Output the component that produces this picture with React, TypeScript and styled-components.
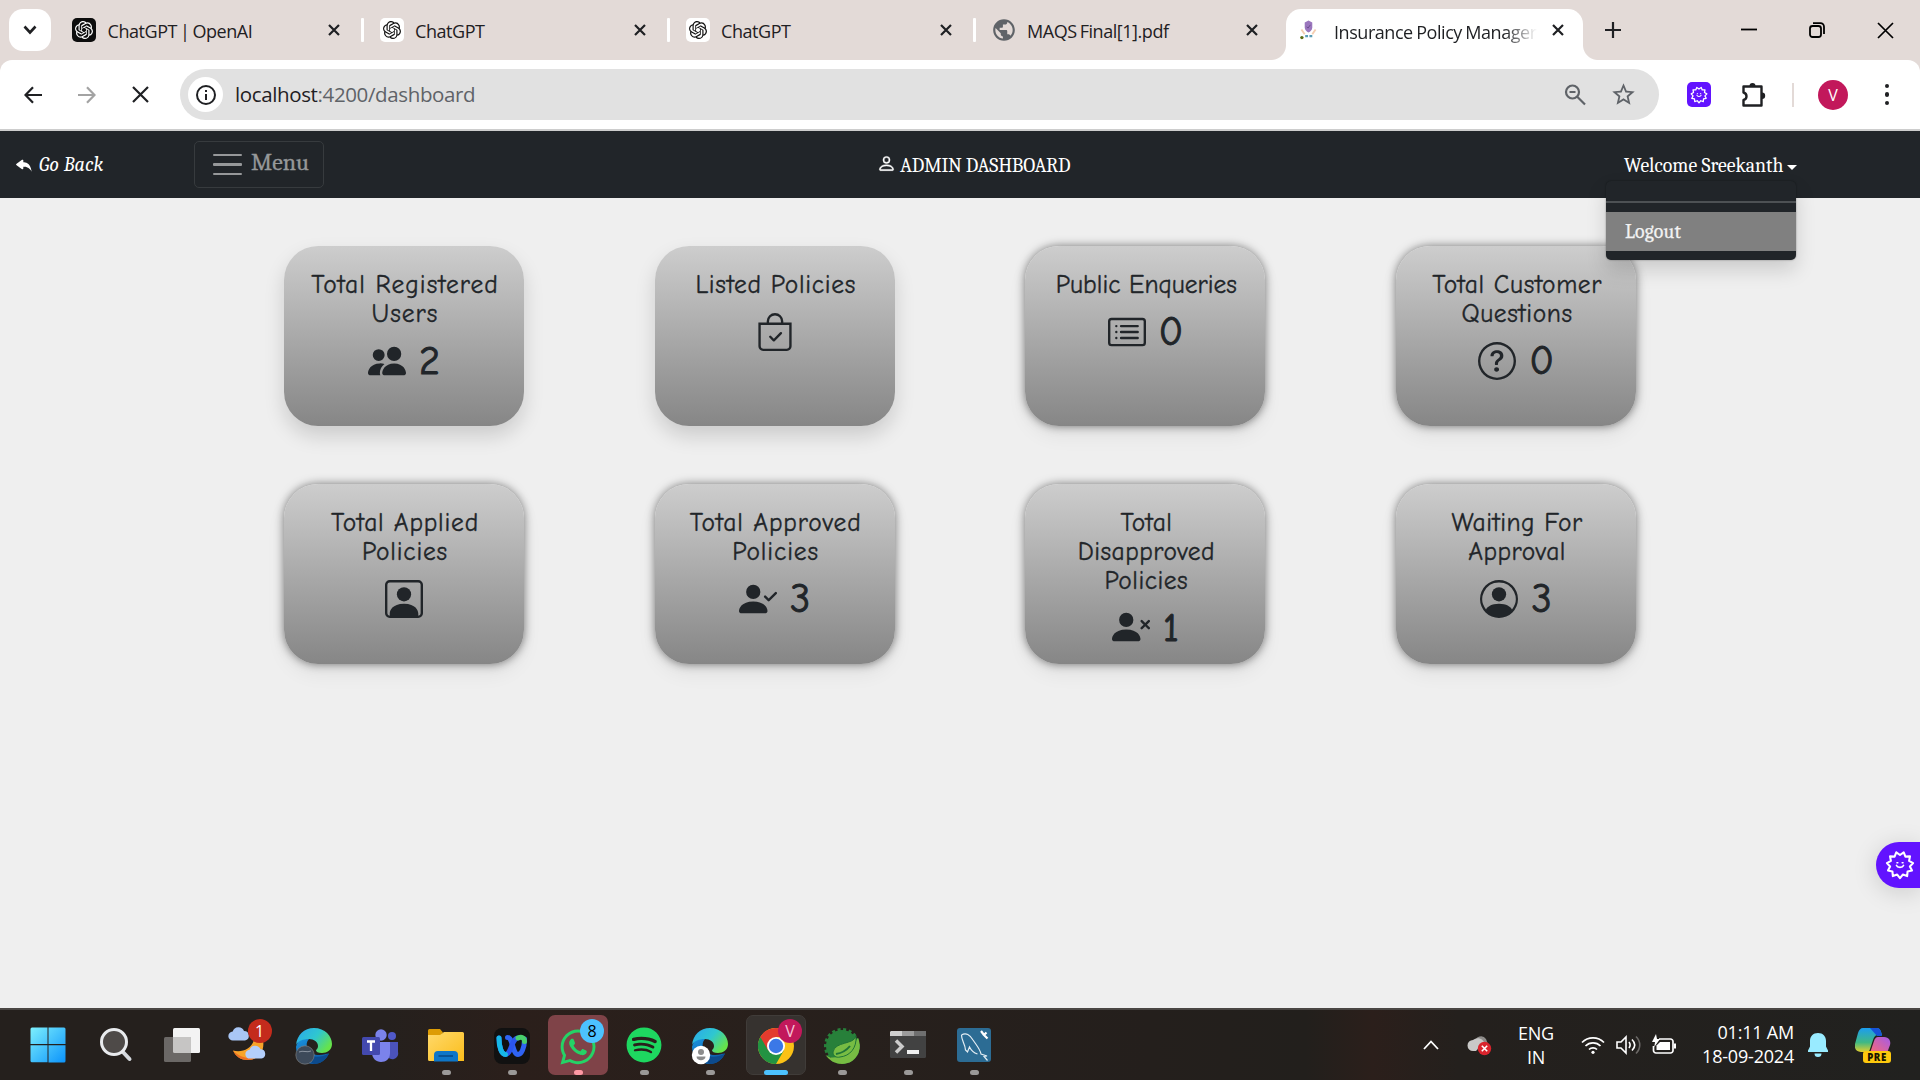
import React from "react";
import styled, { createGlobalStyle, css } from "styled-components";
import {
  BsPeopleFill, BsBagCheck, BsCardList, BsQuestionCircle, BsPersonSquare,
  BsPersonCheckFill, BsPersonXFill, BsPersonCircle, BsPerson, BsReplyFill,
} from "react-icons/bs";
import { SiOpenai } from "react-icons/si";
import { FaWhatsapp, FaSpotify } from "react-icons/fa";
import { MdPublic, MdStarBorder } from "react-icons/md";

const ui = `"Segoe UI", "Open Sans", "Noto Sans", sans-serif`;
const serif = `Cambria, "Liberation Serif", serif`;
const comic = `"Comic Sans MS", "Comic Neue", "Open Sans", sans-serif`;

const GlobalStyle = createGlobalStyle`
  *, *::before, *::after { box-sizing: border-box; }
  body { margin: 0; background: #efefef; overflow: hidden; }
  svg { display: block; flex: none; }
`;

const Screen = styled.div`
  width: 1920px; height: 1080px; display: flex; flex-direction: column;
  background: #efefef; font-family: ${ui}; color: #202124; overflow: hidden;
`;

/* ---------- tab strip ---------- */
const TabStrip = styled.div`
  height: 60px; flex: none; display: flex; background: #e3dad7; padding-left: 9px;
`;
const TabSearch = styled.div`
  width: 42px; height: 42px; margin-top: 9px; border-radius: 14px; background: #fff;
  display: flex; align-items: center; justify-content: center;
`;
const Tabs = styled.div`display: flex; margin-left: 9px; height: 60px;`;
const Tab = styled.div<{ $active?: boolean; $first?: boolean; $last?: boolean }>`
  position: relative; width: ${p => (p.$active ? 297 : p.$first ? 307.5 : 306)}px; height: ${p => (p.$active ? 51 : 60)}px;
  margin-top: ${p => (p.$active ? 9 : 0)}px; display: flex; align-items: center;
  padding: ${p => (p.$active ? "0 19.5px 9px 10px" : "0 23.5px 0 12px")};
  ${p => p.$active ? css`
    background: #fff; border-radius: 15px 15px 0 0; margin-left: 0.5px;
    &::before, &::after { content: ""; position: absolute; bottom: 0; width: 15px; height: 15px; }
    &::before { left: -15px; background: radial-gradient(circle at 0 0, transparent 14.5px, #fff 15.5px); }
    &::after { right: -15px; background: radial-gradient(circle at 100% 0, transparent 14.5px, #fff 15.5px); }
  ` : css`
    &::after { content: ""; width: 3px; height: 24px; margin-left: 21px; margin-right: -20px; border-radius: 1px; background: ${p.$last ? "transparent" : "#fff"}; }
  `}
`;
const Favicon = styled.div<{ $dark?: boolean; $plain?: boolean }>`
  width: 24px; height: 24px; flex: none; border-radius: 5px; display: flex; align-items: center; justify-content: center;
  background: ${p => (p.$plain ? "transparent" : p.$dark ? "#0d0d0d" : "#fff")}; color: ${p => (p.$dark ? "#fff" : "#111")};
`;
const TabTitle = styled.div<{ $fade?: boolean }>`
  flex: 1; min-width: 0; margin: 2px 12px 0 11.5px; white-space: nowrap;
  font-size: 18px; line-height: 26px; letter-spacing: -0.45px; word-spacing: -1.2px; color: #1f2023;
  ${p => p.$fade && "mask-image: linear-gradient(90deg, #000 84%, transparent 100%); margin: 3px 15px 0 14px; word-spacing: -0.8px;"}
`;
const NewTab = styled.div`display: flex; align-items: center; margin-left: 22px; height: 60px;`;
const WindowControls = styled.div`
  margin-left: auto; display: flex; align-items: center; height: 60px; padding-right: 26px; gap: 52px;
`;

/* ---------- toolbar ---------- */
const ToolbarBack = styled.div`background: #e3dad7; flex: none;`;
const Toolbar = styled.div`
  height: 71px; background: #fff; border-radius: 12px 12px 0 0; border-bottom: 2px solid #cdcdcd;
  display: flex; align-items: center; padding: 0 24px 0 24px;
`;
const NavButtons = styled.div`display: flex; gap: 36px; width: 156px;`;
const Omnibox = styled.div`
  width: 1479px; height: 51px; border-radius: 26px; background: #e1e1e1; display: flex; align-items: center; padding: 0 22px 0 8px;
`;
const SiteInfo = styled.div`
  width: 35px; height: 35px; border-radius: 50%; background: #fff; display: flex; align-items: center; justify-content: center;
`;
const Url = styled.div`
  flex: 1; margin-left: 12px; margin-top: -1px; font-size: 20.5px; line-height: 30px; color: #1f2023; letter-spacing: -0.37px;
  span { color: #5f6368; }
`;
const OmniIcons = styled.div`display: flex; align-items: center; gap: 24px; color: #5f6368;`;
const Extensions = styled.div`display: flex; align-items: center; margin-left: 28px; flex: 1;`;
const ExtBadge = styled.div`
  width: 24px; height: 25px; border-radius: 5px; background: #6213ff; display: flex; align-items: center; justify-content: center; margin-right: 30px;
`;
const Rule = styled.div`width: 2px; height: 24px; background: #e3dad7; margin: 0 24.5px 0 24.5px;`;
const Avatar = styled.div`
  width: 30px; height: 30px; border-radius: 50%; background: #c2185b; color: #fff; font-size: 16px; line-height: 30px; text-align: center;
`;
const Dots = styled.div`
  display: flex; flex-direction: column; gap: 4px; margin-left: auto; margin-right: 7px;
  i { width: 4.5px; height: 4.5px; border-radius: 50%; background: #1f2023; }
`;

/* ---------- application navbar ---------- */
const Navbar = styled.nav`
  height: 67px; flex: none; background: #212529; color: #fff; font-family: ${serif}; display: flex; align-items: center; position: relative;
`;
const GoBack = styled.a`
  width: 194px; padding-left: 15px; display: flex; align-items: center; gap: 5px; font-size: 20px; font-style: italic; letter-spacing: 0.15px;
`;
const MenuToggle = styled.div`
  width: 130px; height: 47px; border: 1px solid #373b3e; border-radius: 5px; display: flex; align-items: center; padding-left: 18px; gap: 9px;
  font-size: 23.8px; color: #96989a; -webkit-text-stroke: 0.3px #96989a;
  span { margin-top: -5px; }
`;
const Burger = styled.div`
  width: 29px; display: flex; flex-direction: column; gap: 7.2px;
  i { height: 2.4px; background: #96989a; border-radius: 1px; }
`;
const Brand = styled.div`
  margin-left: 553px; margin-top: 1px; display: flex; align-items: center; gap: 4px; font-size: 20px; white-space: nowrap; letter-spacing: -0.25px;
  svg { stroke: #fff; stroke-width: 0.4px; margin-top: -3px; }
`;
const UserMenu = styled.div`
  position: absolute; left: 1624px; top: 22.5px; font-size: 19.8px; line-height: 24px; display: flex; align-items: center; gap: 4px; white-space: nowrap;
  &::after { content: ""; border: 5px solid transparent; border-top-color: #fff; border-bottom: 0; margin-top: 4px; }
`;
const Dropdown = styled.div`
  position: absolute; left: 1606px; top: 50px; width: 190px; height: 79px; z-index: 2; background: #212529; border-radius: 5px;
  padding: 20px 0 0; box-shadow: 0 10px 20px rgba(0,0,0,.15), 0 0 2px rgba(0,0,0,.4);
`;
const Divider = styled.div`height: 2px; background: #4d5154; margin-bottom: 9px;`;
const DropItem = styled.div`
  height: 39px; background: #808080; color: #f2f2f2; font-size: 19.8px; line-height: 40px; padding-left: 19px; letter-spacing: 0.2px;
  -webkit-text-stroke: 0.25px #f2f2f2;
`;

/* ---------- dashboard ---------- */
const Main = styled.main`flex: 1; position: relative; padding: 48px 0 0 284px;`;
const Grid = styled.div`display: grid; grid-template-columns: repeat(4, 240px); column-gap: 130.7px; row-gap: 58px;`;
const Card = styled.section<{ $soft?: boolean }>`
  height: 180px; border-radius: 34px; background: linear-gradient(#cdcdcd, #868686); padding: 25px 9px 0 11px; color: #212529;
  display: flex; flex-direction: column; align-items: center; font-family: ${comic};
  box-shadow: ${p => p.$soft ? "0 10px 20px rgba(0,0,0,.15)" : "0 0 10px rgba(0,0,0,.5), 0 10px 20px rgba(0,0,0,.06)"};
`;
const CardTitle = styled.h5<{ $ls: number }>`
  margin: 0; font-size: 25.5px; line-height: 28.8px; font-weight: 400; text-align: center; white-space: pre-line;
  letter-spacing: ${p => p.$ls}px; -webkit-text-stroke: 0.35px #212529;
`;
const CardStat = styled.div`
  display: flex; align-items: center; gap: 13px; margin: 8px 2px 0 0; height: 48px; font-size: 40px; line-height: 48px;
  span { -webkit-text-stroke: 1px #212529; padding-top: 1px; }
`;
const Widget = styled.div`
  position: absolute; right: 0; top: 644px; width: 44px; height: 46px; border-radius: 23px 0 0 23px; background: #6213ff;
  display: flex; align-items: center; padding-left: 9px; box-shadow: 0 4px 24px rgba(0,0,0,.15);
`;

/* ---------- taskbar ---------- */
const Taskbar = styled.footer`
  height: 72px; flex: none; border-top: 2px solid #4a4644; display: flex; align-items: center; padding-left: 13.5px;
  background: linear-gradient(90deg, #25201d 0, #25201d 20%, #2b1f1b 27%, #28201c 40%, #241f1c 60%, #221f1c 68%, #2b1f1b 71.5%, #24201d 76%, #21211f 100%);
`;
const TaskItem = styled.div<{ $w?: number; $tone?: "alert" | "active" }>`
  width: ${p => p.$w ?? 66}px; height: 62px; display: flex; justify-content: center; position: relative;
  &::before {
    content: ""; position: absolute; inset: 1px 3px; border-radius: 7px;
    background: ${p => (p.$tone === "alert" ? "#7f4348" : p.$tone === "active" ? "#36322f" : "transparent")};
    ${p => p.$tone === "active" && "border: 1px solid #403c39;"}
  }
  > svg { position: relative; margin-top: 12.5px; }
`;
const Running = styled.i<{ $c?: string; $w?: number }>`
  position: absolute; bottom: 1px; width: ${p => p.$w ?? 9}px; height: 5px; border-radius: 3px; background: ${p => p.$c ?? "#9b9998"};
`;
const Badge = styled.b<{ $bg: string; $fg: string; $x?: number }>`
  position: absolute; left: ${p => p.$x ?? 35}px; top: 5px; width: 24px; height: 24px; border-radius: 50%; background: ${p => p.$bg}; color: ${p => p.$fg};
  font-weight: 400; font-size: 16px; line-height: 24px; text-align: center;
`;
const Tray = styled.div`margin-left: auto; display: flex; align-items: center; padding-right: 29px; color: #fff;`;
const TrayText = styled.div<{ $right?: boolean; $w: number }>`
  width: ${p => p.$w}px; font-size: 18px; line-height: 24px; text-align: ${p => (p.$right ? "right" : "center")}; white-space: nowrap; letter-spacing: -0.2px;
  margin-top: ${p => (p.$right ? "-2px" : "0")};
`;
const Gap = styled.div<{ $w: number }>`width: ${p => p.$w}px; flex: none;`;

/* ---------- drawings ---------- */
const Cross = ({ s = 12, w = 2.2, c = "#1f2023" }) => (
  <svg width={s} height={s} viewBox={`0 0 ${s} ${s}`}><path d={`M1 1L${s - 1} ${s - 1}M${s - 1} 1L1 ${s - 1}`} stroke={c} strokeWidth={w} /></svg>
);
const burst = (() => {
  const n = 11; let d = "";
  for (let i = 0; i < n * 2; i++) {
    const a = Math.PI / 2 + (i * Math.PI) / n, r = i % 2 ? 10 : 13.2;
    d += `${i ? "L" : "M"}${(15 + r * Math.cos(a)).toFixed(2)} ${(15 + r * Math.sin(a)).toFixed(2)}`;
  }
  return d + "Z";
})();
const Burst = ({ size = 30 }) => (
  <svg width={size} height={size} viewBox="0 0 30 30" fill="none" stroke="#fff" strokeWidth="2.1" strokeLinejoin="round" strokeLinecap="round">
    <path d={burst} /><path d="M11.5 15.5c1 2.6 6 2.6 7 0" strokeWidth="1.7" /><path d="M12 12.8h.8M17.2 12.8h.8" strokeWidth="1.6" />
  </svg>
);
const Policy = () => (
  <svg width="17" height="21" viewBox="0 0 18 22">
    <path d="M5 2.500l4-2 4 2v5c0 3-2 4.500-4 5.500C7 12 5 10.500 5 7.500z" fill="#9a76bd" /><path d="M7 7l1.500 1.500L11 5" stroke="#6a4a8c" fill="none" />
    <path d="M1.500 10l3.500 5M16.500 10L13 15" stroke="#f4cdb0" strokeWidth="2" /><path d="M5.500 17h3M10 17h3" stroke="#5a9cb5" strokeWidth="2.500" /><circle cx="2" cy="18.500" r="1.800" fill="#5a6b12" />
  </svg>
);
const EdgeLogo = ({ id, children }: { id: string; children?: React.ReactNode }) => (
  <svg width="38" height="38" viewBox="0 0 38 38">
    <defs>
      <linearGradient id={id + "a"} x1="0" y1="0" x2="1" y2=".6"><stop offset="0" stopColor="#2aa7ee" /><stop offset=".55" stopColor="#2fc7d0" /><stop offset="1" stopColor="#66e34a" /></linearGradient>
      <linearGradient id={id + "b"} x1="0" y1="0" x2=".6" y2="1"><stop offset="0" stopColor="#1a94e0" /><stop offset="1" stopColor="#0c59a4" /></linearGradient>
    </defs>
    <path d="M1 20C3 12 9 10 14 12c-5 5-2 15 8 16 6 .6 9-1.500 12-1.500C31 33 25 37 19 37 9 37 1 29 1 20z" fill={`url(#${id}b)`} />
    <path d="M14 22c0 7 8 11 20 4.500C31 33 25 37 19 37c-6-3-8-10-5-15z" fill="#0c4a8c" />
    <path d="M1 18C2 8 9 1 19 1c11 0 18 8 18 16 0 6-5 9-10 9-4 0-6-1.500-6-2.500S23 22 23 19c0-4-4-7-9-7-6 0-11 2-13 6z" fill={`url(#${id}a)`} />
    {children}
  </svg>
);
const StartLogo = () => (
  <svg width="36" height="36" viewBox="0 0 36 36"><defs><linearGradient id="win" x1="0" y1="0" x2="1" y2="1"><stop offset="0" stopColor="#7df0fd" /><stop offset="1" stopColor="#0b93fb" /></linearGradient></defs>
    <path fill="url(#win)" d="M2 .5h15.500v16.500H.5V2A1.500 1.500 0 012 .5zM18.500.5H34A1.500 1.500 0 0135.500 2v15h-17zM.5 18.300h17v17H2A1.500 1.500 0 01.5 34zM18.500 18.300h17V34a1.500 1.500 0 01-1.500 1.500H18.500z" /></svg>
);
const SearchGlyph = () => (
  <svg width="34" height="36" viewBox="0 0 34 36"><path d="M22.500 23.500l8 8.500" stroke="#d5d9de" strokeWidth="4" strokeLinecap="round" /><circle cx="15" cy="15" r="12.500" fill="#4e4a48" stroke="#e9ebee" strokeWidth="3" /></svg>
);
const TaskView = () => (
  <svg width="38" height="36" viewBox="0 0 38 36"><rect x="10" y="1" width="27" height="25" rx="1.500" fill="#f3f3f3" /><rect x="1" y="10" width="27" height="25" rx="1.500" fill="#6b6866" /><path d="M10 10h18v16H11.500A1.500 1.500 0 0110 24.500z" fill="#c6c5c4" /></svg>
);
const cloud = "M5 14a4.500 4.500 0 01-.3-9A6 6 0 0116 4.500 4.800 4.800 0 0117 14z";
const Weather = () => (
  <svg width="40" height="38" viewBox="0 0 40 38"><path d="M35 13c2 11-4 20-15 20-7 0-12-3-15-9.500 8 2 18-.5 21-10.500z" fill="#f8a42a" /><path d="M5 23.500C8 30 13 33 20 33c3 0 5-.5 7-2-9 1-17-2-22-7.500z" fill="#ee6f25" />
    <path d={cloud} fill="#a9c6f5" transform="translate(0 -.5)" /><path d={cloud} fill="#b4cffb" transform="translate(17 18) scale(.97)" /></svg>
);
const Teams = () => (
  <svg width="38" height="38" viewBox="0 0 38 38"><circle cx="31" cy="9" r="4" fill="#5059c9" /><path d="M26 15h11v10a5.500 5.500 0 01-11 3z" fill="#4b53bc" /><circle cx="20" cy="8" r="5.700" fill="#7b83eb" /><path d="M11 15h18v11c0 6-4 9-9 9s-9-4-9-9z" fill="#7b83eb" /><rect x="1" y="10" width="18" height="18" rx="1.500" fill="#4349ae" /><path d="M6 14.500h8M10 14.500v9.500" stroke="#fff" strokeWidth="2.300" /></svg>
);
const Folder = () => (
  <svg width="36" height="36" viewBox="0 0 36 36"><defs><linearGradient id="fo" x1="0" y1="0" x2="1" y2="1"><stop offset="0" stopColor="#ffd96b" /><stop offset="1" stopColor="#fbbd1b" /></linearGradient></defs>
    <path d="M0 3.500A1.500 1.500 0 011.500 2H12l3 3.500L12 9H0z" fill="#dd9c05" /><path d="M0 8h12l4-3h18.500A1.500 1.500 0 0136 6.500V34H1.500A1.500 1.500 0 010 32.500z" fill="url(#fo)" /><path d="M6 34.500V28a4 4 0 014-4h16a4 4 0 014 4v6.500z" fill="#0e76c8" /><path d="M10.500 29h14.500" stroke="#08508f" strokeWidth="1.800" /></svg>
);
const Webex = () => (
  <svg width="36" height="38" viewBox="0 0 36 38"><rect y="1" width="36" height="36" rx="8" fill="#111" />
    <g fill="none" strokeWidth="5" strokeLinecap="round">
      <path d="M30.500 12c0 9-3 15.500-6.500 15.500-5.500 0-5-17-10.500-17" stroke="#2f63f3" />
      <path d="M5 11c0 9 2.500 16.500 6.500 16.500 6 0 6-16.500 12.500-16.500" stroke="#2b55ee" />
      <path d="M5 11c0 9 2.500 16.500 6.500 16.500" stroke="#16b8e8" />
      <path d="M24 11c3.500-1.500 6.500-.5 6.500 3.500" stroke="#48cf6c" />
    </g></svg>
);
const Chrome = () => (
  <svg width="36" height="38" viewBox="0 0 36 38"><circle cx="18" cy="19" r="18" fill="#fbc116" /><path d="M18 19L2.400 10A18 18 0 0118 1a18 18 0 0115.600 9H18z" fill="#e33b2e" /><path d="M2.400 10A18 18 0 0018 37l7.800-13.500H18z" fill="#229342" /><path d="M2.400 10L10.200 23.500 18 19V10z" fill="#e33b2e" /><circle cx="18" cy="19" r="9" fill="#fff" /><circle cx="18" cy="19" r="7.200" fill="#3b78e7" /></svg>
);
const Spring = () => (
  <svg width="38" height="38" viewBox="0 0 38 38"><circle cx="19" cy="19" r="16" fill="#27803a" /><circle cx="19" cy="19" r="16.500" fill="none" stroke="#27803a" strokeWidth="3" strokeDasharray="3 2.600" />
    <path d="M2.500 28C10 34 22 30 35 11c5 11-1 26-16 26-7 0-13-4-16.500-9z" fill="#77bc43" />
    <path d="M33 9C31 18 12 14 10 25c0 4 3 6 7 5 10-1 17-9 16-21z" fill="#77bc43" stroke="#1f7437" strokeWidth="1" /><path d="M13 27c6-1 10-3 14-8" fill="none" stroke="#1f7437" strokeWidth="2" /></svg>
);
const Terminal = () => (
  <svg width="36" height="38" viewBox="0 0 36 38"><rect y="4" width="36" height="27" rx="1.500" fill="#424242" /><path d="M1 4h11v5H0V5z" fill="#d0d0d0" /><path d="M12 4h12v5H12z" fill="#9c9c9c" /><path d="M24 4h12v5H24z" fill="#6f6f6f" /><path d="M6 13.500l6 6-6 6" fill="none" stroke="#ccc" strokeWidth="3.500" /><rect x="17" y="23" width="12" height="4" fill="#f0f0f0" /></svg>
);
const Workbench = () => (
  <svg width="34" height="38" viewBox="0 0 34 38"><rect y="1" width="34" height="34" rx="3" fill="#2c6c94" /><path d="M4.500 8C9 5 13 8 16 13c4 6 7 9 8 14l6 2-3 .5 3.500 4M4.500 8c0 6 3.500 8 4 15l2 2 2-5c2 4 5 6 8 7" fill="none" stroke="#e5eef4" strokeWidth="1.200" /><path d="M24 4l3 4M29.500 5.500L27 8l3.500 3.500" stroke="#fff" strokeWidth="2.200" fill="none" /></svg>
);
const Copilot = () => (
  <svg width="36" height="38" viewBox="0 0 36 38"><defs><linearGradient id="c1" x1="0" y1="0" x2="0" y2="1"><stop offset="0" stopColor="#1b9df0" /><stop offset=".6" stopColor="#3fb884" /><stop offset="1" stopColor="#e3cf2c" /></linearGradient><linearGradient id="c2" x1="1" y1="0" x2="0" y2="1"><stop offset="0" stopColor="#a45be8" /><stop offset="1" stopColor="#fa6a72" /></linearGradient></defs>
    <path d="M8 2h14c3 0 4 3 5 7h-4c-3 0-4 2-5 5l-3 9c-.5 2-1.500 3-3 3H6c-5 0-7-4-6-8L3 7c1-3 2.500-5 5-5z" fill="url(#c1)" /><path d="M15 2h7c3 0 4 3 5 8h-5z" fill="#1653d8" /><path d="M23 11h6c5 0 7 4 6 8l-3 8H15l4-12c1-2.500 2-4 4-4z" fill="url(#c2)" />
    <rect x="8" y="25" width="28" height="12" rx="3" fill="#fec90d" /><text x="22" y="34.600" textAnchor="middle" fontFamily="Open Sans" fontWeight="800" fontSize="9.600" letterSpacing=".6" fill="#1b1500">PRE</text></svg>
);

const cards = [
  { title: "Total Registered\nUsers", Icon: BsPeopleFill, value: "2", soft: true, ls: 1.05 },
  { title: "Listed Policies", Icon: BsBagCheck, value: "", soft: true, ls: 0.7 },
  { title: "Public Enqueries", Icon: BsCardList, value: "0", ls: 0.02 },
  { title: "Total Customer\nQuestions", Icon: BsQuestionCircle, value: "0", ls: 0.6 },
  { title: "Total Applied\nPolicies", Icon: BsPersonSquare, value: "", ls: 0.8 },
  { title: "Total Approved\nPolicies", Icon: BsPersonCheckFill, value: "3", ls: 0.9 },
  { title: "Total\nDisapproved\nPolicies", Icon: BsPersonXFill, value: "1", ls: 0.5 },
  { title: "Waiting For\nApproval", Icon: BsPersonCircle, value: "3", ls: 0.5 },
];

export default function App() {
  return (
    <Screen>
      <GlobalStyle />
      <TabStrip>
        <TabSearch><svg width="14" height="10" viewBox="0 0 14 10"><path d="M1.500 1.500L7 7.500l5.500-6" fill="none" stroke="#1f2023" strokeWidth="2.600" /></svg></TabSearch>
        <Tabs>
          <Tab $first><Favicon $dark><SiOpenai size={18} /></Favicon><TabTitle>ChatGPT | OpenAI</TabTitle><Cross /></Tab>
          <Tab><Favicon><SiOpenai size={18} /></Favicon><TabTitle>ChatGPT</TabTitle><Cross /></Tab>
          <Tab><Favicon><SiOpenai size={18} /></Favicon><TabTitle>ChatGPT</TabTitle><Cross /></Tab>
          <Tab $last><Favicon $plain><MdPublic size={26} color="#5f6368" /></Favicon><TabTitle>MAQS Final[1].pdf</TabTitle><Cross /></Tab>
          <Tab $active><Favicon $plain><Policy /></Favicon><TabTitle $fade>Insurance Policy Manager</TabTitle><Cross /></Tab>
        </Tabs>
        <NewTab><svg width="16" height="16" viewBox="0 0 16 16"><path d="M8 0v16M0 8h16" stroke="#1f2023" strokeWidth="2.200" /></svg></NewTab>
        <WindowControls>
          <svg width="16" height="16" viewBox="0 0 16 16"><path d="M0 7.500h16" stroke="#000" strokeWidth="1.800" /></svg>
          <svg width="16" height="16" viewBox="0 0 16 16" fill="none" stroke="#000" strokeWidth="1.800"><rect x="1" y="4" width="11" height="11" rx="2.500" /><path d="M4 1.200h7.500A3.500 3.500 0 0115 4.700V12" /></svg>
          <Cross s={17} w={1.700} c="#000" />
        </WindowControls>
      </TabStrip>
      <ToolbarBack>
        <Toolbar>
          <NavButtons>
            <svg width="18" height="18" viewBox="0 0 18 18" fill="none" stroke="#1f2023" strokeWidth="2.200"><path d="M18 9H2M9 1.200L1.500 9 9 16.800" /></svg>
            <svg width="18" height="18" viewBox="0 0 18 18" fill="none" stroke="#a3a3a3" strokeWidth="2.200"><path d="M0 9h16M9 1.200L16.500 9 9 16.800" /></svg>
            <Cross s={17} w={2.200} />
          </NavButtons>
          <Omnibox>
            <SiteInfo><svg width="22" height="22" viewBox="0 0 22 22"><circle cx="11" cy="11" r="9" fill="none" stroke="#1f2023" strokeWidth="2" /><path d="M11 10v6M11 6v2" stroke="#1f2023" strokeWidth="2" /></svg></SiteInfo>
            <Url>localhost<span>:4200/dashboard</span></Url>
            <OmniIcons>
              <svg width="22" height="22" viewBox="0 0 22 22" fill="none" stroke="#5f6368" strokeWidth="2.200"><circle cx="8.500" cy="8" r="6.500" /><path d="M13 12.500l8 8M5.500 8h6" /></svg>
              <MdStarBorder size={27} />
            </OmniIcons>
          </Omnibox>
          <Extensions>
            <ExtBadge><Burst size={18} /></ExtBadge>
            <svg width="26" height="26" viewBox="0 0 26 26"><path d="M2.500 4.500h18v19h-18v-5.500c4-1 4-6.500 0-7.500z" fill="none" stroke="#1f2023" strokeWidth="2.400" strokeLinejoin="round" /><path d="M8.500 4a3 3 0 016 0zM21 10.500a3.200 3.200 0 010 6.400z" fill="#1f2023" /></svg>
            <Rule />
            <Avatar>V</Avatar>
            <Dots><i /><i /><i /></Dots>
          </Extensions>
        </Toolbar>
      </ToolbarBack>
      <Navbar>
        <GoBack><BsReplyFill size={19} />Go Back</GoBack>
        <MenuToggle><Burger><i /><i /><i /></Burger><span>Menu</span></MenuToggle>
        <Brand><BsPerson size={19} />ADMIN DASHBOARD</Brand>
        <UserMenu>Welcome Sreekanth</UserMenu>
        <Dropdown><Divider /><DropItem>Logout</DropItem></Dropdown>
      </Navbar>
      <Main>
        <Grid>
          {cards.map(({ title, Icon, value, soft, ls }) => (
            <Card key={title} $soft={soft}>
              <CardTitle $ls={ls}>{title}</CardTitle>
              <CardStat><Icon size={38} />{value && <span>{value}</span>}</CardStat>
            </Card>
          ))}
        </Grid>
        <Widget><Burst /></Widget>
      </Main>
      <Taskbar>
        <TaskItem $w={69}><StartLogo /></TaskItem>
        <TaskItem><SearchGlyph /></TaskItem>
        <TaskItem><TaskView /></TaskItem>
        <TaskItem $w={67}><Weather /><Badge $bg="#c42b1c" $fg="#fff" $x={33}>1</Badge></TaskItem>
        <TaskItem $w={65.5}><EdgeLogo id="e1"><circle cx="10" cy="28" r="9.200" fill="#3d4a5a" stroke="#888" strokeWidth=".6" /><path d="M4 25c4-2 8 1 12-1" stroke="#8a94a0" fill="none" /></EdgeLogo></TaskItem>
        <TaskItem><Teams /></TaskItem>
        <TaskItem><Folder /><Running /></TaskItem>
        <TaskItem><Webex /><Running /></TaskItem>
        <TaskItem $tone="alert"><FaWhatsapp size={40} color="#25d366" /><Badge $bg="#4cc2ff" $fg="#000">8</Badge><Running $c="#ff99a4" /></TaskItem>
        <TaskItem><FaSpotify size={36} color="#1ed760" /><Running /></TaskItem>
        <TaskItem><EdgeLogo id="e2"><circle cx="10" cy="28" r="9.200" fill="#fff" /><circle cx="10" cy="25" r="3" fill="#8c8c8c" /><path d="M5.500 29.500h9c0 5-9 5-9 0z" fill="#8c8c8c" /></EdgeLogo><Running /></TaskItem>
        <TaskItem $tone="active"><Chrome /><Badge $bg="#c2185b" $fg="#f7c3d6">V</Badge><Running $c="#4cc2ff" $w={24} /></TaskItem>
        <TaskItem><Spring /><Running /></TaskItem>
        <TaskItem><Terminal /><Running /></TaskItem>
        <TaskItem><Workbench /><Running /></TaskItem>
        <Tray>
          <svg width="16" height="10" viewBox="0 0 16 10"><path d="M1 9l7-7.500L15 9" fill="none" stroke="#fff" strokeWidth="1.800" /></svg>
          <Gap $w={28} />
          <svg width="26" height="24" viewBox="0 0 26 24"><path d="M8 9a6 6 0 0111-3l3 8H8z" fill="#8e8c8a" /><path d="M6 18a5.500 5.500 0 010-11 7 7 0 0111 2L9 18z" fill="#c9c8c7" /><circle cx="17.500" cy="15.500" r="6.700" fill="#d9242d" /><path d="M14.800 12.800l5.400 5.400M20.200 12.800l-5.400 5.400" stroke="#fff" strokeWidth="1.600" /></svg>
          <Gap $w={23} />
          <TrayText $w={40}>ENG<br />IN</TrayText>
          <Gap $w={25} />
          <svg width="24" height="20" viewBox="0 0 24 20" fill="none" stroke="#fff" strokeWidth="1.700"><path d="M1 7.500a15.500 15.500 0 0122 0M4.500 11a10.500 10.500 0 0115 0M8 14.500a5.700 5.700 0 018 0" /><circle cx="12" cy="17.300" r="1.600" fill="#fff" stroke="none" /></svg>
          <Gap $w={11} />
          <svg width="25" height="20" viewBox="0 0 25 20" fill="none" stroke="#fff" strokeWidth="1.600"><path d="M1 7h4l5-5v16l-5-5H1zM13 7c1.500 2 1.500 4 0 6M16 4.500c3.500 3.500 3.500 7.500 0 11" /><path d="M20 1.500c5 5 5 12 0 17" stroke="#6c6967" /></svg>
          <Gap $w={11} />
          <svg width="25" height="22" viewBox="0 0 25 22"><path d="M7 5h11.500A2.500 2.500 0 0121 7.500v9a2.500 2.500 0 01-2.500 2.500H4a2.500 2.500 0 01-2.500-2.500V12" fill="none" stroke="#fff" strokeWidth="1.700" /><path d="M8 8h10v8H4.500v-4.500z" fill="#fff" /><path d="M22 9.500h2v5h-2zM4 0L0 8h3l-.7 5L8 5H5z" fill="#fff" /></svg>
          <Gap $w={17} />
          <TrayText $right $w={100}>01:11 AM<br />18-09-2024</TrayText>
          <Gap $w={14} />
          <svg width="20" height="24" viewBox="0 0 20 24"><path d="M10 0c5 0 8 3.500 8 8v5.500l2 4V19H0v-1.500l2-4V8c0-4.500 3-8 8-8zM6.500 20.500h7a3.500 3.500 0 01-7 0z" fill="#99ebff" /></svg>
          <Gap $w={27} />
          <Copilot />
        </Tray>
      </Taskbar>
    </Screen>
  );
}
